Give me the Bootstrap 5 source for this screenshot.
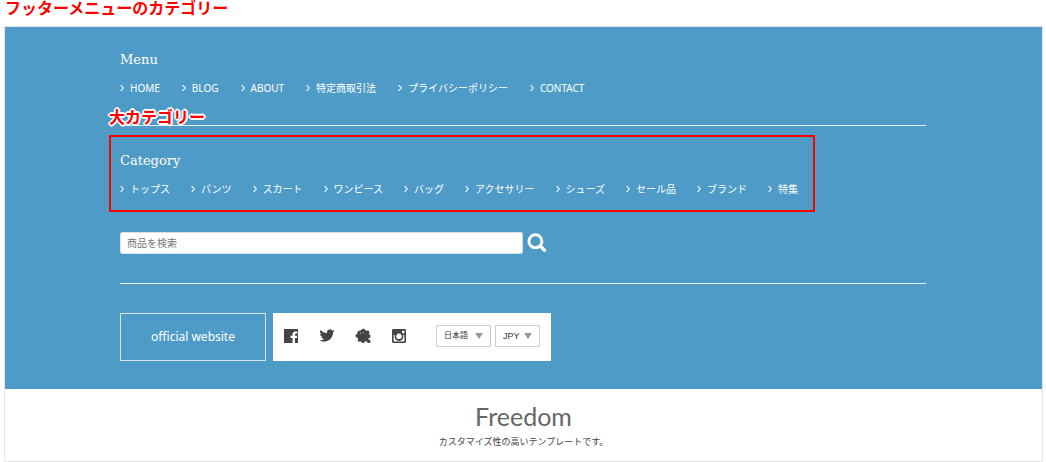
<!DOCTYPE html>
<html lang="ja">
<head>
<meta charset="utf-8">
<meta name="viewport" content="width=device-width, initial-scale=1">
<title>Freedom</title>
<link href="https://cdn.jsdelivr.net/npm/bootstrap@5.3.0/dist/css/bootstrap.min.css" rel="stylesheet">
<style>
  body { font-family: "Noto Sans", "Noto Sans CJK JP", sans-serif; font-size: 10px; line-height: 16px; color: #444; background: #fff; }
  .note { color: #f00; font-size: 16px; line-height: 18px; font-weight: 700; font-family: "Liberation Sans", "Noto Sans CJK JP", sans-serif; }
  .page-note { padding: 0 5px 8px; }
  .frame { margin: 0 3px 0 4px; border: 1px solid #e6e6e6; }
  .panel { background: #4f9bc8; color: #fff; padding: 23px 17px 28px 16px; }
  .inner { max-width: 806px; margin: 0 auto; }
  .sec-title { font-family: "DejaVu Serif", serif; font-size: 13px; line-height: 20px; font-weight: 400; margin: 0 0 10px; }
  .links { column-gap: 21px; }
  .menu-links { column-gap: 22px; }
  .links a, .menu-links a { color: #fff; text-decoration: none; display: flex; align-items: center; gap: 6px; white-space: nowrap; }
  .rule { border: 0; border-top: 1px solid #fff; opacity: .85; margin: 0; }
  .menu-rule { margin-top: 29px; }
  .label-note { left: -11px; top: -16px; text-shadow: 2px 0 #fff, -2px 0 #fff, 0 2px #fff, 0 -2px #fff, 1px 1px #fff, -1px 1px #fff, 1px -1px #fff, -1px -1px #fff; }
  .marked { border: 2px solid #f00; width: fit-content; padding: 14px 15px 13px 9px; margin: 9px 0 20px -11px; }
  .search { gap: 4px; margin-bottom: 29px; }
  .search .form-control { width: 50%; height: 22px; font-size: 10px; line-height: 16px; padding: 0 6px; border: 1px solid #d5e0e8; border-radius: 2px; color: #444; }
  .search .form-control::placeholder { color: #777; }
  .tail { gap: 7px; margin-top: 29px; }
  .site-btn { width: 146px; height: 48px; border: 1px solid #d6e8f3; border-radius: 0; color: #fff; font-size: 12px; display: flex; align-items: center; justify-content: center; padding: 0; }
  .social { background: #fff; height: 48px; padding: 0 11px 2px 10px; }
  .social .icons { gap: 20px; margin-right: 29px; }
  .social .icons a, .social .icons svg { display: block; color: #444; }
  .pick { position: relative; }
  .pick select { appearance: none; display: block; height: 22px; border: 1px solid #ccc; border-radius: 1px; background: #fff; color: #333; font-family: "Liberation Sans", "Noto Sans CJK JP", sans-serif; font-size: 8px; padding: 0 7px; }
  .pick svg { position: absolute; right: 8px; top: 8px; pointer-events: none; }
  .lang select { width: 55px; }
  .cur select { width: 45px; font-size: 9px; }
  .foot { padding: 13px 0 11px; }
  .brand { font-family: "Lato", sans-serif; font-size: 25px; line-height: 28px; color: #666; margin: 0 0 4px; font-weight: 400; }
  .foot p { font-size: 9px; line-height: 16px; margin: 0; }
</style>
</head>
<body>
<svg class="d-none">
  <symbol id="chev" viewBox="0 0 4 8"><path d="M.7 1.2 3.3 4 .7 6.8" fill="none" stroke="currentColor" stroke-width="1.1"/></symbol>
  <symbol id="tri" viewBox="0 0 8 6"><path d="M0 0h8L4 6z" fill="#999"/></symbol>
</svg>
<div class="note page-note">フッターメニューのカテゴリー</div>
<footer class="frame">
  <div class="panel">
    <div class="inner">
      <nav aria-label="Menu">
        <h2 class="sec-title">Menu</h2>
        <div class="menu-links d-flex flex-wrap">
          <a href="#"><svg width="4" height="8"><use href="#chev"/></svg>HOME</a>
          <a href="#"><svg width="4" height="8"><use href="#chev"/></svg>BLOG</a>
          <a href="#"><svg width="4" height="8"><use href="#chev"/></svg>ABOUT</a>
          <a href="#"><svg width="4" height="8"><use href="#chev"/></svg>特定商取引法</a>
          <a href="#"><svg width="4" height="8"><use href="#chev"/></svg>プライバシーポリシー</a>
          <a href="#"><svg width="4" height="8"><use href="#chev"/></svg>CONTACT</a>
        </div>
      </nav>
      <div class="position-relative menu-rule">
        <hr class="rule">
        <div class="note label-note position-absolute">大カテゴリー</div>
      </div>
      <nav class="marked" aria-label="Category">
        <h2 class="sec-title">Category</h2>
        <div class="links d-flex flex-wrap">
          <a href="#"><svg width="4" height="8"><use href="#chev"/></svg>トップス</a>
          <a href="#"><svg width="4" height="8"><use href="#chev"/></svg>パンツ</a>
          <a href="#"><svg width="4" height="8"><use href="#chev"/></svg>スカート</a>
          <a href="#"><svg width="4" height="8"><use href="#chev"/></svg>ワンピース</a>
          <a href="#"><svg width="4" height="8"><use href="#chev"/></svg>バッグ</a>
          <a href="#"><svg width="4" height="8"><use href="#chev"/></svg>アクセサリー</a>
          <a href="#"><svg width="4" height="8"><use href="#chev"/></svg>シューズ</a>
          <a href="#"><svg width="4" height="8"><use href="#chev"/></svg>セール品</a>
          <a href="#"><svg width="4" height="8"><use href="#chev"/></svg>ブランド</a>
          <a href="#"><svg width="4" height="8"><use href="#chev"/></svg>特集</a>
        </div>
      </nav>
      <form class="search d-flex align-items-center">
        <input type="search" class="form-control" placeholder="商品を検索" aria-label="商品を検索">
        <button type="button" class="btn p-0 border-0 d-flex text-white" aria-label="検索">
          <svg width="20" height="20" viewBox="0 0 20 20" fill="none" stroke="currentColor"><circle cx="8.4" cy="8.300" r="6.500" stroke-width="2.9"/><path d="m13.500 13.300 4 4" stroke-width="3.4" stroke-linecap="round"/></svg>
        </button>
      </form>
      <hr class="rule">
      <div class="tail d-flex flex-wrap">
        <a href="#" class="btn site-btn">official website</a>
        <div class="social d-flex align-items-center">
          <div class="icons d-flex">
            <a href="#" aria-label="Facebook"><svg width="16" height="16" viewBox="0 0 16 16"><path fill="currentColor" d="M1 1h14v14h-3V10h2l.3-2.200H12V6.600q0-1.100 1.100-1.100h1.300V3.400h-2Q9.500 3.400 9.500 6.300v1.500H7.600V10h1.900v5H1z"/></svg></a>
            <a href="#" aria-label="Twitter"><svg width="16" height="16" viewBox="-.5 -.5 17 17"><path fill="currentColor" d="M5.026 14c6.038 0 9.341-5.003 9.341-9.334q.001-.211-.006-.422A6.700 6.700 0 0 0 16 2.542a6.600 6.600 0 0 1-1.889.518 3.300 3.300 0 0 0 1.447-1.817 6.500 6.500 0 0 1-2.087.793A3.286 3.286 0 0 0 7.875 5.030 9.320 9.320 0 0 1 1.112 1.600 3.290 3.290 0 0 0 2.130 5.983 3.200 3.200 0 0 1 .640 5.574v.045a3.290 3.290 0 0 0 2.632 3.218 3.200 3.200 0 0 1-.865.115 3 3 0 0 1-.614-.057 3.280 3.280 0 0 0 3.067 2.277A6.600 6.600 0 0 1 0 12.540 9.300 9.300 0 0 0 5.026 14"/></svg></a>
            <a href="#" aria-label="Ameba"><svg width="16" height="16" viewBox="0 0 16 16"><path fill="currentColor" d="M5.600 2.600 7.600.8l2 .3 1.200 1.700 2.700-.2 1 1.500-.5 2.100 1.500 1.300-.2 1.900-2 1.200.2 1 1.700.6.400 1.500-1 1.400-1.700-.1-1.800-1.900-1.300.5-.6 1.200-1.900.2-1.400-1.500-2.300.2-1-1.500.6-1.800L.8 8.700.5 7l1.800-1.300.2-2 1.300-1z"/><g fill="#fff"><circle cx="5.800" cy="5" r=".5"/><circle cx="8.500" cy="4.700" r=".5"/></g></svg></a>
            <a href="#" aria-label="Instagram"><svg width="16" height="16" viewBox="0 0 16 16"><path fill="currentColor" fill-rule="evenodd" d="M2.200 1h11.600Q15 1 15 2.200v11.600q0 1.200-1.200 1.200H2.200Q1 15 1 13.800V2.200Q1 1 2.200 1m8.900 1.700v2.600h2.300V2.700zM2.600 7v6.400h10.800V7h-1.300a4.400 4.400 0 1 1-8.200 0zM8 5.500a2.800 2.800 0 1 0 .01 0"/></svg></a>
          </div>
          <div class="d-flex gap-1">
            <div class="pick lang"><select aria-label="言語"><option>日本語</option></select><svg width="8" height="6"><use href="#tri"/></svg></div>
            <div class="pick cur"><select aria-label="通貨"><option>JPY</option></select><svg width="8" height="6"><use href="#tri"/></svg></div>
          </div>
        </div>
      </div>
    </div>
  </div>
  <div class="foot text-center">
    <h1 class="brand">Freedom</h1>
    <p>カスタマイズ性の高いテンプレートです。</p>
  </div>
</footer>
<script src="https://cdn.jsdelivr.net/npm/bootstrap@5.3.0/dist/js/bootstrap.bundle.min.js"></script>
</body>
</html>
